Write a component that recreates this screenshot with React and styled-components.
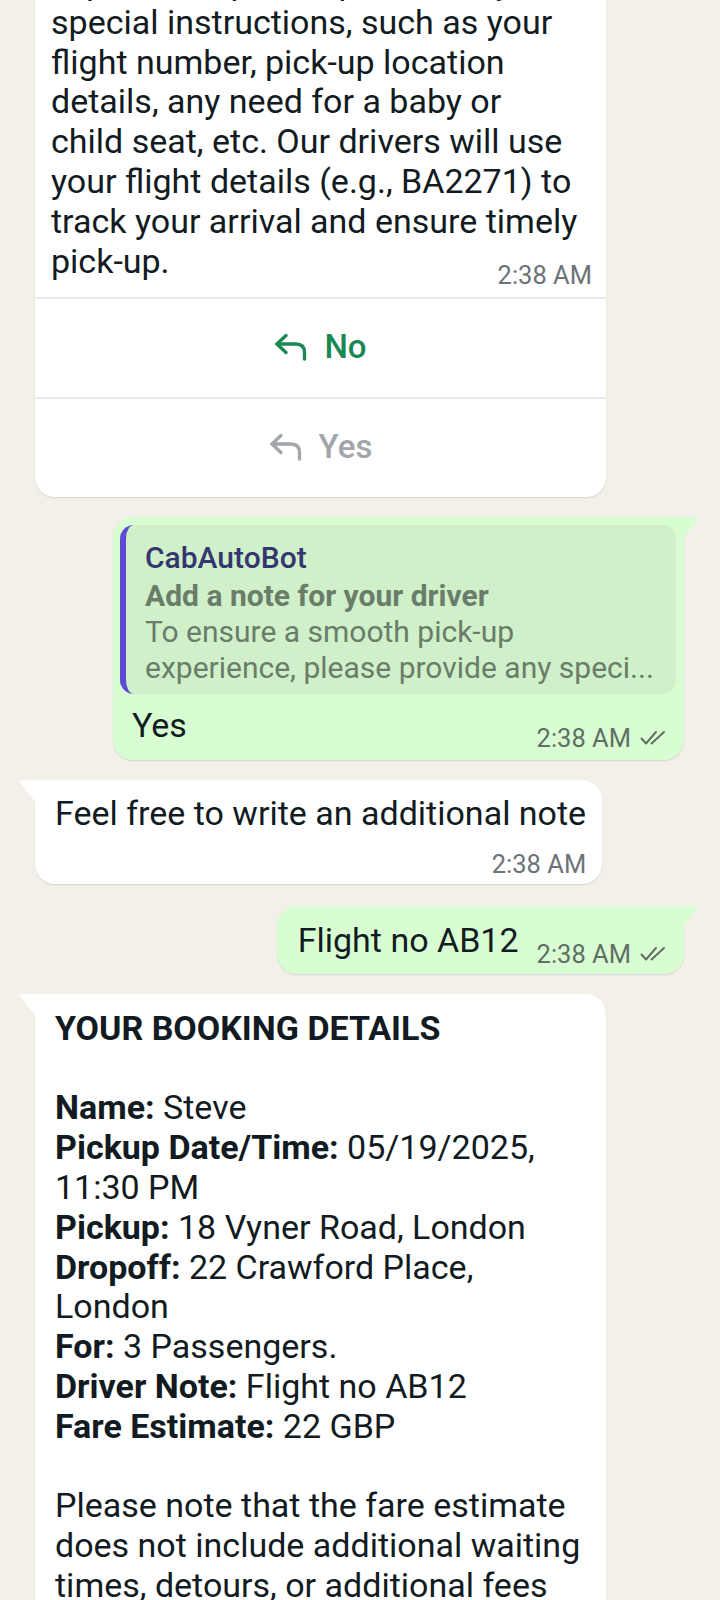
import React from 'react';
import styled, { createGlobalStyle } from 'styled-components';

const Global = createGlobalStyle`
  html, body { margin: 0; padding: 0; background: #f3f0ea; }
  body { font-family: Roboto, "Noto Sans", "Liberation Sans", sans-serif; color: #111b21; }
  * { box-sizing: border-box; }
`;

const Page = styled.main`
  width: 720px;
  height: 1600px;
  overflow: hidden;
  background: #f3f0ea;
`;

const Thread = styled.div`
  display: flex;
  flex-direction: column;
  gap: 20px;
  margin-top: -53px;
  padding: 0 20px 0 19px;
`;

const Row = styled.div`
  display: flex;
  justify-content: ${p => (p.$out ? 'flex-end' : 'flex-start')};
  margin-top: ${p => p.$mt || 0}px;
`;

const Bubble = styled.div`
  position: relative;
  max-width: 571px;
  width: ${p => (p.$full ? '571px' : 'auto')};
  background: ${p => (p.$out ? '#d9fdd3' : '#ffffff')};
  border-radius: 20px;
  border-top-${p => (p.$out ? 'right' : 'left')}-radius: ${p => (p.$tail ? '0' : '20px')};
  margin-${p => (p.$out ? 'right' : 'left')}: 16px;
  box-shadow: 0 1px 1.5px rgba(0, 0, 0, 0.12);

  &::before {
    content: '';
    display: ${p => (p.$tail ? 'block' : 'none')};
    position: absolute;
    top: 0;
    ${p => (p.$out ? 'right: -15px;' : 'left: -16px;')}
    width: 16px;
    height: 21px;
    background: inherit;
    clip-path: ${p =>
      p.$out
        ? 'polygon(0 0, 88% 0, 100% 6%, 0 100%)'
        : 'polygon(12% 0, 100% 0, 100% 100%, 0 6%)'};
  }
`;

const Body = styled.div`
  padding: ${p => p.$pad};
  display: ${p => (p.$inline ? 'flex' : 'block')};
  align-items: flex-end;
  gap: 18px;
`;

const Text = styled.div`
  font-size: 34px;
  line-height: 39.8px;
  color: #111b21;
`;

const Line = styled.div`
  white-space: nowrap;
  min-height: 39.8px;
`;

const B = styled.b`
  font-weight: 700;
`;

const Meta = styled.div`
  display: flex;
  justify-content: flex-end;
  align-items: center;
  gap: 9px;
  flex-shrink: 0;
  font-size: 25.5px;
  line-height: 28px;
  color: ${p => (p.$out ? '#5f6f63' : '#6c7378')};
  margin-top: ${p => p.$mt || 0}px;
  margin-bottom: ${p => p.$mb || 0}px;
  margin-left: auto;
`;

const Quote = styled.div`
  margin: 8px 8px 0 7px;
  background: #cff0c8;
  border-left: 6px solid #5b4bd5;
  border-radius: 14px;
  padding: 13px 16px 8px 19px;
  color: #6a7d6a;
  font-size: 30px;
  line-height: 36px;
`;

const QuoteAuthor = styled.div`
  color: #35366f;
  font-weight: 500;
  line-height: 40px;
`;

const QuoteTitle = styled.div`
  font-weight: 700;
`;

const QuoteLine = styled.div`
  white-space: nowrap;
`;

const ButtonList = styled.div`
  display: flex;
  flex-direction: column;
`;

const ReplyButton = styled.div`
  height: 100px;
  border-top: 2px solid #ebebeb;
  display: flex;
  align-items: center;
  justify-content: center;
  gap: 16px;
  padding-bottom: 3px;
  font-size: 33px;
  font-weight: 500;
  color: ${p => (p.$disabled ? '#a2a6aa' : '#1a8754')};
`;

const ReplyIcon = () => (
  <svg width="34" height="28" viewBox="0 0 34 28" fill="none" stroke="currentColor"
    strokeWidth="3.4" strokeLinecap="round" strokeLinejoin="round">
    <path d="M12 2.5 L3 11 L12 19.5" />
    <path d="M3 11 H22 Q30.5 11 30.5 19.5 V26" />
  </svg>
);

const Ticks = () => (
  <svg width="27" height="16" viewBox="0 0 27 16" fill="none" stroke="currentColor"
    strokeWidth="2" strokeLinecap="round" strokeLinejoin="round">
    <path d="M1.5 8.5 L6 13.5 L16 2" />
    <path d="M11.5 13.5 L24 2" />
  </svg>
);

export default function App() {
  return (
    <Page>
      <Global />
      <Thread>
        <Row>
          <Bubble $full>
            <Body $pad="16px 14px 8px 16px">
              <Text>
                <Line>experience, please provide any</Line>
                <Line>special instructions, such as your</Line>
                <Line>flight number, pick-up location</Line>
                <Line>details, any need for a baby or</Line>
                <Line>child seat, etc. Our drivers will use</Line>
                <Line>your flight details (e.g., BA2271) to</Line>
                <Line>track your arrival and ensure timely</Line>
                <Line>pick-up.</Line>
              </Text>
              <Meta $mt={-20}>2:38 AM</Meta>
            </Body>
            <ButtonList>
              <ReplyButton><ReplyIcon />No</ReplyButton>
              <ReplyButton $disabled><ReplyIcon />Yes</ReplyButton>
            </ButtonList>
          </Bubble>
        </Row>

        <Row $out>
          <Bubble $out $tail $full>
            <Quote>
              <QuoteAuthor>CabAutoBot</QuoteAuthor>
              <QuoteTitle>Add a note for your driver</QuoteTitle>
              <QuoteLine>To ensure a smooth pick-up</QuoteLine>
              <QuoteLine>experience, please provide any speci...</QuoteLine>
            </Quote>
            <Body $inline $pad="12px 17px 14px 19px">
              <Text><Line>Yes</Line></Text>
              <Meta $out $mb={-6}>2:38 AM <Ticks /></Meta>
            </Body>
          </Bubble>
        </Row>

        <Row>
          <Bubble $tail>
            <Body $pad="14px 16px 6px 20px">
              <Text><Line>Feel free to write an additional note</Line></Text>
              <Meta $mt={16}>2:38 AM</Meta>
            </Body>
          </Bubble>
        </Row>

        <Row $out $mt={2}>
          <Bubble $out $tail>
            <Body $inline $pad="15px 17px 13px 21px">
              <Text><Line>Flight no AB12</Line></Text>
              <Meta $out $mb={-7}>2:38 AM <Ticks /></Meta>
            </Body>
          </Bubble>
        </Row>

        <Row>
          <Bubble $tail $full>
            <Body $pad="15px 16px 20px 20px">
              <Text>
                <Line><B>YOUR BOOKING DETAILS</B></Line>
                <Line />
                <Line><B>Name:</B> Steve</Line>
                <Line><B>Pickup Date/Time:</B> 05/19/2025,</Line>
                <Line>11:30 PM</Line>
                <Line><B>Pickup:</B> 18 Vyner Road, London</Line>
                <Line><B>Dropoff:</B> 22 Crawford Place,</Line>
                <Line>London</Line>
                <Line><B>For:</B> 3 Passengers.</Line>
                <Line><B>Driver Note:</B> Flight no AB12</Line>
                <Line><B>Fare Estimate:</B> 22 GBP</Line>
                <Line />
                <Line>Please note that the fare estimate</Line>
                <Line>does not include additional waiting</Line>
                <Line>times, detours, or additional fees</Line>
                <Line>that may apply.</Line>
              </Text>
            </Body>
          </Bubble>
        </Row>
      </Thread>
    </Page>
  );
}
